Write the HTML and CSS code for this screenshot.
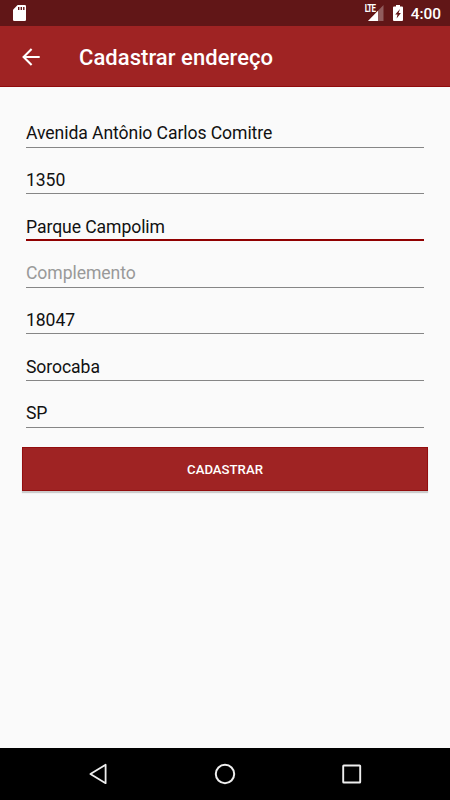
FILE: index.html
```html
<!DOCTYPE html>
<html lang="pt-BR">
<head>
  <meta charset="UTF-8">
  <meta name="viewport" content="width=device-width, initial-scale=1.0">
  <title>Cadastrar endereço</title>
  <link rel="stylesheet" href="styles.css">
</head>
<body>

  <!-- Barra de status -->
  <div class="status-bar">
    <svg class="sd-icon" width="13" height="16" viewBox="0 0 13 16">
      <path fill="#fff" d="M4.6 0H11.7Q13 0 13 1.3V14.7Q13 16 11.7 16H1.3Q0 16 0 14.7V4.8Z"/>
      <path fill="#611617" d="M5 2H6.4V5H5zM7.6 2H9V5H7.6zM10.1 2H11.5V5H10.1z"/>
    </svg>
    <div class="status-right">
      <div class="signal">
        <span class="lte">LTE</span>
        <svg class="signal-icon" width="16" height="16" viewBox="0 0 16 16">
          <path fill="#fff" fill-opacity=".3" d="M0 16L15.5 0V16z"/>
          <path fill="#fff" d="M0 16L10 5.7V16z"/>
        </svg>
      </div>
      <svg class="battery-icon" width="10" height="16" viewBox="0 0 10 16">
        <path fill="#fff" d="M3 0H7V1.6H9Q10 1.6 10 2.6V15Q10 16 9 16H1Q0 16 0 15V2.6Q0 1.6 1 1.6H3z"/>
        <path fill="#611617" d="M7 4L2.2 9.6H4.5L3.6 13.6L7.9 8H5.6z"/>
      </svg>
      <span class="clock">4:00</span>
    </div>
  </div>

  <!-- Cabeçalho -->
  <div class="toolbar">
    <svg class="back-arrow" width="18" height="18" viewBox="0 0 18 18">
      <path fill="none" stroke="#fff" stroke-width="2.1" d="M17.7 9H2M9.6 1L1.6 9L9.6 17"/>
    </svg>
    <h1 class="title">Cadastrar endereço</h1>
  </div>

  <!-- Formulário de endereço -->
  <form class="content">
    <input class="field" type="text" value="Avenida Antônio Carlos Comitre">
    <input class="field" type="text" value="1350">
    <input class="field active" type="text" value="Parque Campolim">
    <input class="field" type="text" placeholder="Complemento">
    <input class="field" type="text" value="18047">
    <input class="field" type="text" value="Sorocaba">
    <input class="field" type="text" value="SP">
    <button class="button" type="button">CADASTRAR</button>
  </form>

  <!-- Barra de navegação -->
  <div class="nav-bar">
    <svg width="24" height="24" viewBox="0 0 24 24">
      <path fill="none" stroke="#eee" stroke-width="1.8" stroke-linejoin="round" d="M4.4 12L19.6 2.8V21.2z"/>
    </svg>
    <svg width="24" height="24" viewBox="0 0 24 24">
      <circle cx="12" cy="12" r="9.2" fill="none" stroke="#eee" stroke-width="2"/>
    </svg>
    <svg width="24" height="24" viewBox="0 0 24 24">
      <rect x="3.2" y="3.5" width="17" height="17" rx=".6" fill="none" stroke="#eee" stroke-width="1.9"/>
    </svg>
  </div>

</body>
</html>
```
FILE: styles.css
```css
body {
  display: flex;
  flex-direction: column;
  height: 100vh;
  margin: 0;
  background-color: #fafafa;
  font-family: Roboto, sans-serif;
  color: #111;
  overflow: hidden;
}

/* Barra de status */
.status-bar {
  display: flex;
  justify-content: space-between;
  align-items: center;
  height: 26px;
  padding: 0 9px 0 13px;
  box-sizing: border-box;
  background-color: #611617;
  color: #fff;
}

.status-right {
  display: flex;
  align-items: center;
}

.signal {
  position: relative;
  width: 20px;
  height: 16px;
  margin-right: 9px;
}

.signal-icon {
  display: block;
  margin-left: 4px;
}

.lte {
  position: absolute;
  left: 1px;
  top: 0;
  font-size: 8px;
  font-weight: 700;
  line-height: 8px;
  letter-spacing: -0.8px;
  transform: scaleY(1.3);
}

.battery-icon {
  margin-right: 8px;
}

.clock {
  padding-top: 2px;
  font-size: 15.4px;
  font-weight: 500;
  line-height: 24px;
}

/* Cabeçalho */
.toolbar {
  display: flex;
  align-items: center;
  height: 61px;
  padding-left: 22px;
  box-sizing: border-box;
  border-bottom: 1px solid #900b0c;
  background-color: #9f2323;
}

.back-arrow {
  margin-top: 2px;
}

.title {
  margin: 2px 0 0 39px;
  font-size: 22px;
  font-weight: 500;
  letter-spacing: 0.05px;
  color: #fff;
}

/* Formulário */
.content {
  flex: 1;
  display: flex;
  flex-direction: column;
  padding: 14px 22px 0;
}

.field {
  height: 46.7px;
  margin: 0 4px;
  padding: 19px 0 0;
  box-sizing: border-box;
  border: none;
  border-bottom: 1px solid #868686;
  border-radius: 0;
  outline: none;
  background: none;
  font-family: inherit;
  font-size: 17.6px;
  letter-spacing: -0.08px;
  color: #111;
}

.field::placeholder {
  color: #999;
}

.active {
  padding-top: 20px;
  border-bottom: 2px solid #900000;
}

.button {
  height: 44px;
  margin-top: 19px;
  padding-top: 3px;
  border: 1px solid #930d0e;
  background-color: #9f2323;
  box-shadow: 0 2px 1px #ccc;
  font-family: inherit;
  font-size: 13.2px;
  font-weight: 500;
  color: #fff;
}

/* Barra de navegação */
.nav-bar {
  display: flex;
  justify-content: center;
  align-items: center;
  gap: 103px;
  height: 52px;
  background-color: #000;
}
```
